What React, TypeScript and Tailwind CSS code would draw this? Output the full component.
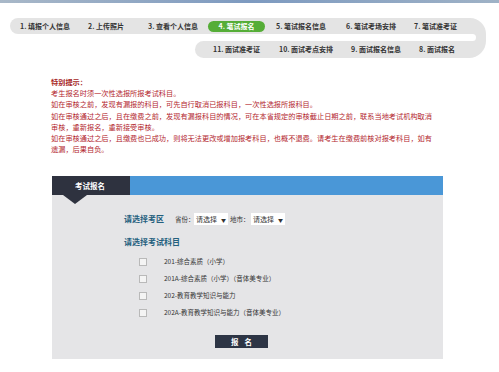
import React from "react";

const stepsTop = [
  { label: "1. 填报个人信息", w: "w-[68px]" },
  { label: "2. 上传照片", w: "w-[60px]" },
  { label: "3. 查看个人信息", w: "w-[60px]" },
];
const stepsTopAfter = [
  { label: "5. 笔试报名信息", w: "w-[70px]" },
  { label: "6. 笔试考场安排", w: "w-[68px]" },
  { label: "7. 笔试准考证", w: "w-[60px]" },
];
const stepsBottom = [
  { label: "11. 面试准考证", w: "w-[66px]" },
  { label: "10. 面试考点安排", w: "w-[72px]" },
  { label: "9. 面试报名信息", w: "w-[68px]" },
  { label: "8. 面试报名", w: "w-[50px]" },
];

const notice = [
  "考生报名时须一次性选报所报考试科目。",
  "如在审核之前，发现有漏报的科目，可先自行取消已报科目，一次性选报所报科目。",
  "如在审核通过之后，且在缴费之前，发现有漏报科目的情况，可在本省规定的审核截止日期之前，联系当地考试机构取消",
  "审核，重新报名，重新接受审核。",
  "如在审核通过之后，且缴费也已成功，则将无法更改或增加报考科目，也概不退费。请考生在缴费前核对报考科目，如有",
  "遗漏，后果自负。",
];

const subjects = [
  "201-综合素质（小学）",
  "201A-综合素质（小学）（音体美专业）",
  "202-教育教学知识与能力",
  "202A-教育教学知识与能力（音体美专业）",
];

const Select = () => (
  <span className="flex h-[12px] w-[34px] items-center justify-between bg-white px-[2px] text-[7px] text-[#333]">
    <span className="whitespace-nowrap">请选择</span>
    <span className="text-[5px]">▼</span>
  </span>
);

export default function App() {
  return (
    <div
      className="h-[372px] w-[499px] overflow-hidden bg-white"
      style={{ fontFamily: '"Noto Sans CJK SC", "Liberation Sans", sans-serif' }}
    >
      <div className="h-[3px] bg-gradient-to-r from-[#a9b8c8] via-[#7d9ac0] to-[#9fb2c6]" />

      {/* step track */}
      <div className="ml-[10px] mt-[15px] w-[476px] text-[7px] font-bold text-[#333]">
        <div className="flex h-[16px] items-center rounded-l-[8px] rounded-tr-[16px] bg-[#e4e4e4] pl-[10px]">
          {stepsTop.map((s) => (
            <span key={s.label} className={`${s.w} whitespace-nowrap`}>
              {s.label}
            </span>
          ))}
          <span className="mr-[11px] flex h-[11px] w-[57px] items-center justify-center rounded-full bg-[#55ad37] text-white">
            4. 笔试报名
          </span>
          {stepsTopAfter.map((s) => (
            <span key={s.label} className={`${s.w} whitespace-nowrap`}>
              {s.label}
            </span>
          ))}
        </div>
        <div className="ml-[185px] flex h-[7px] bg-[#e4e4e4]">
          <div className="flex-1 rounded-r-full bg-white" />
          <div className="w-[10px]" />
        </div>
        <div className="ml-[185px] flex h-[17px] items-center rounded-l-[8.5px] rounded-br-[17px] bg-[#e4e4e4] pl-[18px]">
          {stepsBottom.map((s) => (
            <span key={s.label} className={`${s.w} whitespace-nowrap`}>
              {s.label}
            </span>
          ))}
        </div>
      </div>

      {/* notice */}
      <div className="ml-[51px] mt-[19px] text-[7.2px] leading-[11.2px] text-[#b3262e]">
        <p className="font-bold text-[#a51d24]">特别提示：</p>
        {notice.map((line) => (
          <p key={line} className="whitespace-nowrap">
            {line}
          </p>
        ))}
      </div>

      {/* panel */}
      <div className="ml-[52px] mt-[21px] w-[391px]">
        <div className="flex h-[19px]">
          <div className="relative w-[78px] bg-[#2e323f] pl-[23px] text-[7.5px] font-bold leading-[19px] text-white">
            考试报名
            <span className="absolute left-[11px] top-[19px] h-0 w-0 border-x-[12px] border-t-[9px] border-x-transparent border-t-[#2e323f]" />
          </div>
          <div className="flex-1 bg-[#4a97d7]" />
        </div>
        <div className="h-[164px] bg-[#e5e5e7] pl-[72px] pt-[18px]">
          <div className="flex h-[12px] items-center whitespace-nowrap">
            <span className="w-[51px] text-[8px] font-bold text-[#24607e]">请选择考区</span>
            <span className="w-[19px] text-[6.5px] text-[#333]">省份：</span>
            <Select />
            <span className="ml-[2px] w-[21px] text-[6.5px] text-[#333]">地市：</span>
            <Select />
          </div>
          <div className="mt-[11px] text-[8px] font-bold leading-[12px] text-[#24607e]">
            请选择考试科目
          </div>
          <div className="mt-[5px] flex flex-col">
            {subjects.map((s) => (
              <div key={s} className="flex h-[17px] items-center pl-[15px]">
                <span className="h-[8px] w-[8px] border border-[#b9b9b9] bg-[#f4f4f4]" />
                <span className="ml-[17px] whitespace-nowrap text-[6.5px] text-[#333]">{s}</span>
              </div>
            ))}
          </div>
          <div className="ml-[91px] mt-[14px] flex h-[13px] w-[53px] items-center justify-center bg-[#2d3545] text-[7.5px] font-bold tracking-[6px] text-white">
            <span className="ml-[6px]">报名</span>
          </div>
        </div>
      </div>
    </div>
  );
}
